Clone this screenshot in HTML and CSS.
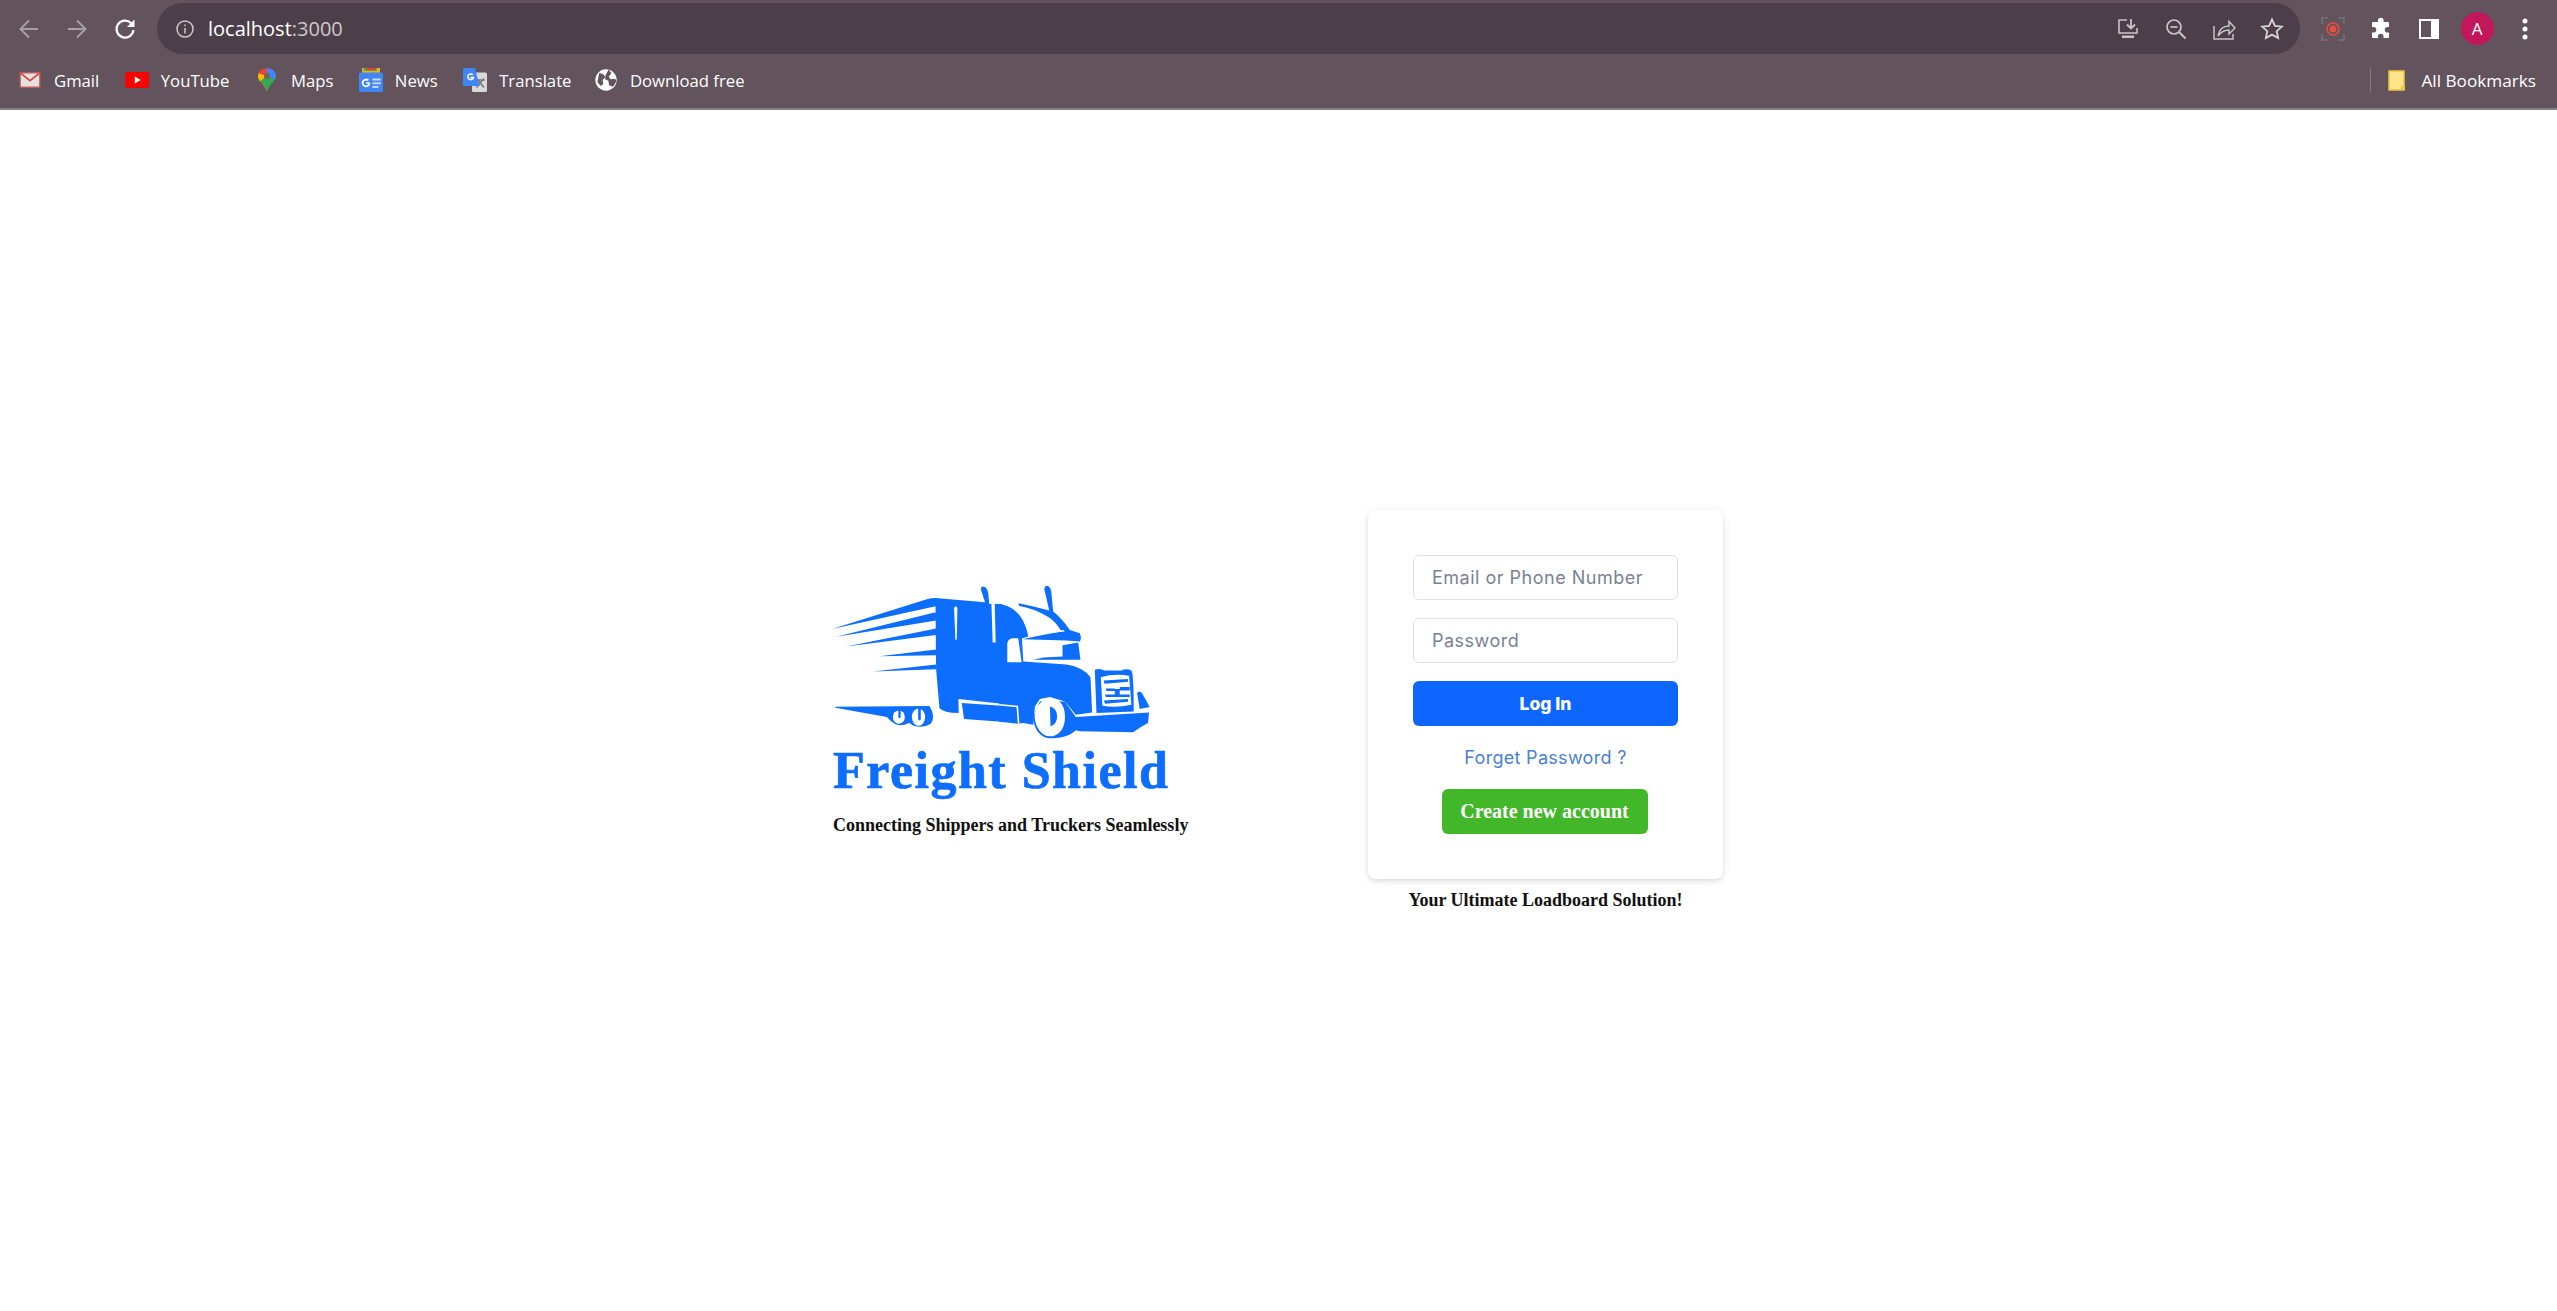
FILE: index.html
```html
<!DOCTYPE html>
<html lang="en">
<head>
    <meta charset="UTF-8">
    <meta name="viewport" content="width=device-width, initial-scale=1.0">
    <title>Freight Shield</title>
    <link rel="stylesheet" href="styles.css">
</head>
<body>
    <!-- browser toolbar -->
    <div class="toolbar">
        <svg class="nav-icon" viewBox="0 0 24 24"><path d="M21 12H4M12 3.500L3.500 12l8.500 8.500" fill="none" stroke="#a89ea5" stroke-width="2"/></svg>
        <svg class="nav-icon" viewBox="0 0 24 24"><path d="M3 12h17M12 3.500l8.500 8.500-8.500 8.500" fill="none" stroke="#a89ea5" stroke-width="2"/></svg>
        <svg class="nav-icon" viewBox="0 0 24 24"><path d="M20.500 13a8.500 8.500 0 1 1-2.500-7L20 8" fill="none" stroke="#fff" stroke-width="2.200"/><path d="M21.500 2.500V10H14z" fill="#fff"/></svg>
        <div class="omnibox">
            <svg class="info-icon" viewBox="0 0 20 20"><circle cx="10" cy="10" r="8" fill="none" stroke="#cfc9cd" stroke-width="1.500"/><path d="M10 9v5.500M10 5.500v1.800" stroke="#cfc9cd" stroke-width="1.500"/></svg>
            <span class="url">localhost<span class="url-port">:3000</span></span>
            <div class="omni-actions">
                <svg class="omni-icon" viewBox="0 0 24 24"><path d="M11 3H3v13h18v-5M3 16" fill="none" stroke="#c9c4c8" stroke-width="1.600"/><path d="M15 2v9M11 7.500l4 4 4-4" fill="none" stroke="#c9c4c8" stroke-width="1.800"/><path d="M6 18.500h12V21H6z" fill="#c9c4c8"/></svg>
                <svg class="omni-icon" viewBox="0 0 24 24"><circle cx="10" cy="10" r="7" fill="none" stroke="#c9c4c8" stroke-width="1.700"/><path d="M15 15l6.500 6.500" stroke="#c9c4c8" stroke-width="2"/><path d="M6.500 10h7" stroke="#c9c4c8" stroke-width="1.700"/></svg>
                <svg class="omni-icon" viewBox="0 0 24 24"><path d="M2 9v13h19v-5" fill="none" stroke="#c9c4c8" stroke-width="1.500"/><path d="M6 19c1-6 5-10 11-10V4.500l6 6.500-6 6v-4c-5 0-8 2-11 6z" fill="none" stroke="#c9c4c8" stroke-width="1.500"/></svg>
                <svg class="omni-icon" viewBox="0 0 24 24"><path d="M12 2.500l2.900 6.300 6.900.8-5.100 4.600 1.400 6.800-6.100-3.400L5.900 21l1.400-6.800L2.200 9.600l6.900-.8z" fill="none" stroke="#d6d2d5" stroke-width="1.800"/></svg>
            </div>
        </div>
        <div class="tool-actions">
            <svg class="tool-icon" viewBox="0 0 24 24"><path d="M1 7V1h6M17 1h6v6M23 17v6h-6M7 23H1v-6" fill="none" stroke="#7a7378" stroke-width="1.500"/><circle cx="12" cy="12" r="6" fill="none" stroke="#e8503e" stroke-width="1.500"/><circle cx="12" cy="12" r="3.500" fill="#e8503e"/></svg>
            <svg class="tool-icon" viewBox="0 0 24 24"><path d="M9 3.500a2.800 2.800 0 0 1 5.600 0V5H19a1 1 0 0 1 1 1v4h-1.400a2.800 2.800 0 0 0 0 5.600H20V20a1 1 0 0 1-1 1h-4.500v-1.500a2.800 2.800 0 0 0-5.600 0V21H4a1 1 0 0 1-1-1v-4.500h1.500a2.800 2.800 0 0 0 0-5.600H3V6a1 1 0 0 1 1-1h5z" fill="#fff"/></svg>
            <svg class="tool-icon" viewBox="0 0 24 24"><path d="M2 2h20v20H2zM4 4v16h10V4z" fill="#fff" fill-rule="evenodd"/></svg>
            <div class="avatar">A</div>
            <svg class="tool-icon" viewBox="0 0 24 24"><circle cx="12" cy="4" r="2.500" fill="#fff"/><circle cx="12" cy="12" r="2.500" fill="#fff"/><circle cx="12" cy="20" r="2.500" fill="#fff"/></svg>
        </div>
    </div>

    <!-- bookmarks -->
    <div class="bookmarks">
        <a class="bookmark">
            <svg class="favicon" viewBox="-1.150 -1.150 18.300 18.300"><path d="M.5 2.500h15v11H.5z" fill="#e6e1e1" stroke="#c9584f"/><path d="M1 3l7 5.500L15 3" fill="none" stroke="#d8453a" stroke-width="1.300"/></svg>
            Gmail
        </a>
        <a class="bookmark">
            <svg class="favicon" viewBox="0 0 16 16"><rect y="2.700" width="16" height="10.600" rx="2" fill="#f00"/><path d="M6.500 5.700L10.500 8l-4 2.300z" fill="#fff"/></svg>
            YouTube
        </a>
        <a class="bookmark">
            <svg class="favicon" viewBox="0 0 16 16"><path d="M8 0c-3.200 0-6 2.400-6 5.300 0 1.300.5 2.400 1.300 3.500L8 15.900z" fill="#ea4335"/><path d="M8 0c3.200 0 6 2.400 6 5.300 0 1-.3 1.800-.9 2.500L8 5.300z" fill="#4285f4"/><path d="M3 8l5-3 5.100 2.800c-1.800 2.600-3.900 4.400-5.100 8.100C7 12.500 5 11 3 8z" fill="#34a853"/><path d="M2.300 3.500L8 5.300 3.300 8.800C2.500 7.700 2 6.600 2 5.300z" fill="#fbbc04"/><circle cx="8" cy="5.300" r="2" fill="#7a5f60"/></svg>
            Maps
        </a>
        <a class="bookmark">
            <svg class="favicon" viewBox="0 0 16 16"><path d="M2 0h12v4H2z" fill="#f2b01e"/><path d="M3 0h9v2H3z" fill="#4caf50"/><path d="M5 0h6v1.500H5z" fill="#d9453a"/><rect y="3" width="16" height="13" rx="1" fill="#4285f4"/><path d="M9 7h5.500v1.300H9zM9 9.500h5.500v1.300H9zM9 12h4v1.300H9z" fill="#c7d9f8"/><path d="M7 10.200a2.300 2.300 0 1 1-.8-2" fill="none" stroke="#fff" stroke-width="1.200"/><path d="M4.800 10h2.400" stroke="#fff" stroke-width="1"/></svg>
            News
        </a>
        <a class="bookmark bookmark-tight">
            <svg class="favicon" viewBox="0 0 16 16"><rect x="6" y="3" width="10" height="13" rx="1" fill="#d9d9d9"/><path d="M9 7l5 6M14 7l-5 6M8.500 8h6" stroke="#777" stroke-width="1"/><path d="M1 0h7l3 12H1a1 1 0 0 1-1-1V1a1 1 0 0 1 1-1z" fill="#4285f4"/><path d="M6.500 4.500A1.900 1.900 0 1 0 7 6.300H5" fill="none" stroke="#fff" stroke-width="1"/></svg>
            Translate
        </a>
        <a class="bookmark">
            <svg class="favicon" viewBox="-1 -1 18 18"><circle cx="8" cy="8" r="8" fill="#fff"/><path d="M3 2.500l3.500 1.500 1 2L5.500 8 6 11l-2 1.500-2.500-3zM10 0l2 3-2 2.500 1.500 2 3.500-.5.800 2-2.500 4-3-1-.5-3.500-2.500-1 .5-3.500 1.500-2.500z" fill="#62535d"/></svg>
            Download free
        </a>
        <div class="all-bookmarks">
            <svg class="folder" viewBox="0 0 18 21"><path d="M1 1h15v14l-0 5H1z" fill="#fde588" stroke="#f0c342" stroke-width="1.500"/><path d="M13 20v-4h4v4z" fill="#f0c342"/></svg>
            All Bookmarks
        </div>
    </div>

    <!-- page -->
    <main class="page">
        <div class="brand">
            <svg class="truck" viewBox="0 0 1110 520">
                <!-- rear half -->
                <g transform="translate(60 30)">
                    <g fill="#0d6efd">
                        <path d="M5 147L290 58Q305 53 320 54V78z"/>
                        <path d="M18 171L316 97Q321 110 318 122z"/>
                        <path d="M48 200L318 146V165z"/>
                        <path d="M148 229L318 209V226z"/>
                        <path d="M128 275L318 254V268z"/>
                        <!-- trailer -->
                        <path d="M316 54L465 67L452 26Q454 16 466 22Q476 30 476 55L478 72H515V372L385 358L386 400Q340 400 328 385L318 268z"/>
                        <path d="M395 370L515 378V426L402 418z"/>
                        <!-- tail streak and rear wheels -->
                        <path d="M15 381L298 379Q318 410 302 432Q280 446 250 438Q240 430 235 430Q215 442 195 433Q180 425 170 412L15 384z"/>
                    </g>
                    <g fill="#fff">
                        <path d="M372 84Q377 76 382 84L380 180H376z"/>
                        <path d="M484 64H494L497 188H488z"/>
                        <ellipse cx="206" cy="412" rx="18" ry="20"/>
                        <ellipse cx="265" cy="412" rx="20" ry="26"/>
                    </g>
                    <g fill="none" stroke="#0d6efd" stroke-linecap="round">
                        <path d="M208 388V412" stroke-width="7"/>
                        <path d="M268 384V418" stroke-width="8"/>
                    </g>
                </g>
                <!-- cab half -->
                <g transform="translate(570 30)">
                    <g fill="#0d6efd">
                        <path d="M-2 72C45 78 75 115 85 170L66 176L70 245L200 254Q250 262 272 292L277 398L228 405L195 365L150 352L120 358L105 380L100 435L70 430L55 432L-2 426z"/>
                        <!-- fairing and stack -->
                        <path d="M55 70Q100 78 148 92L133 26Q135 15 145 18Q155 25 155 45L160 95Q185 115 210 150L240 160Q246 175 240 185L200 182L68 178L105 170L185 155Q165 120 140 108Q100 85 58 78z"/>
                        <path d="M188 196L235 188L242 240L100 240L130 233L188 230z"/>
                        <!-- wheel surround and bumper -->
                        <path d="M100 410C100 445 120 478 160 476C190 476 215 465 228 452L240 455L400 458Q425 440 445 430L448 398L228 412L195 365H120z"/>
                        <!-- grille -->
                        <path d="M285 270Q300 264 315 272H365Q380 264 395 272Q402 280 402 395L290 400z"/>
                        <path d="M412 340Q420 330 428 342L450 382L420 388z"/>
                    </g>
                    <g fill="#fff">
                        <path d="M22 190Q25 175 40 175H55L65 247H22z"/>
                        <path d="M150 356C185 355 198 385 195 420C192 455 170 470 150 470C125 470 105 440 104 410C106 380 125 358 150 356z"/>
                        <path d="M303 292Q345 280 388 288L395 375Q350 385 308 378z"/>
                        <path d="M135 157L190 150L195 155L140 160z"/>
                    </g>
                    <path d="M-2 375L52 380L56 432" fill="none" stroke="#fff" stroke-width="5"/>
                    <g fill="#0d6efd">
                        <path d="M150 380Q172 385 172 412Q170 435 152 440z"/>
                        <path d="M312 302L385 298V306L314 312zM318 326H345V334H320zM360 322H390V332H360zM316 344H390V352H318zM345 328H360V344H345zM312 362L385 358V366L316 372z"/>
                    </g>
                </g>
            </svg>
            <h1 class="brand-name">Freight Shield</h1>
            <p class="brand-tag">Connecting Shippers and Truckers Seamlessly</p>
        </div>
        <div class="login">
            <form class="card">
                <input class="field" type="text" placeholder="Email or Phone Number">
                <input class="field" type="password" placeholder="Password">
                <button class="btn-login" type="button">Log In</button>
                <a class="forget">Forget Password ?</a>
                <button class="btn-create" type="button">Create new account</button>
            </form>
            <p class="login-tag">Your Ultimate Loadboard Solution!</p>
        </div>
    </main>
</body>
</html>
```

FILE: styles.css
```css
* {
    box-sizing: border-box;
}
html, body {
    height: 100%;
}
body {
    margin: 0;
    display: flex;
    flex-direction: column;
    background: #fff;
    overflow: hidden;
}

/* browser */
.toolbar {
    height: 56px;
    background: #62535d;
    display: flex;
    align-items: center;
    gap: 24px;
    padding: 3px 0 2px 17px;
    font-family: "Open Sans", sans-serif;
}
.nav-icon {
    width: 24px;
    height: 24px;
    flex: none;
}
.omnibox {
    flex: 1;
    height: 51px;
    margin: 0 -3px 0 -4px;
    background: #4d3f49;
    border-radius: 26px;
    display: flex;
    align-items: center;
    padding: 0 16px 0 18px;
}
.info-icon {
    width: 20px;
    height: 20px;
    margin: 0 13px 0 0;
}
.url {
    color: #fff;
    font-size: 20px;
}
.url-port {
    color: #cdc8cc;
}
.omni-actions {
    margin-left: auto;
    display: flex;
    gap: 24px;
}
.omni-icon {
    width: 24px;
    height: 24px;
}
.tool-actions {
    display: flex;
    align-items: center;
    gap: 24px;
    padding-right: 20px;
}
.tool-icon {
    width: 24px;
    height: 24px;
}
.avatar {
    width: 33px;
    height: 33px;
    margin: 0 -4.500px;
    border-radius: 50%;
    background: #c2185b;
    color: #fff;
    font-size: 17px;
    display: flex;
    align-items: center;
    justify-content: center;
}
.bookmarks {
    height: 54px;
    background: #62535d;
    border-bottom: 2px solid #8b8087;
    display: flex;
    align-items: center;
    padding: 0 21px 4px 18px;
    color: #fff;
    font-family: "Open Sans", sans-serif;
    font-size: 16.700px;
}
.bookmark {
    display: flex;
    align-items: center;
    gap: 12px;
    margin-right: 25.500px;
}
.bookmark-tight {
    margin-right: 22.500px;
}
.favicon {
    width: 24px;
    height: 24px;
}
.all-bookmarks {
    margin-left: auto;
    height: 24px;
    display: flex;
    align-items: center;
    gap: 15px;
    padding-left: 17px;
    border-left: 1px solid #85797f;
    font-size: 17.200px;
}
.folder {
    width: 18px;
    height: 21px;
}

/* page */
.page {
    flex: 1;
    display: flex;
    align-items: center;
    justify-content: center;
    gap: 180px;
    padding: 2px 2px 0 0;
}
.brand {
    display: flex;
    flex-direction: column;
    width: 356px;
    margin-bottom: 17px;
}
.truck {
    width: 370px;
    height: 173px;
    margin: 0 0 0 -22px;
}
.brand-name {
    margin: -1px 0 0 1px;
    color: #0d6efd;
    font-family: "Liberation Serif", serif;
    font-size: 52px;
    line-height: 58px;
    font-weight: 700;
    letter-spacing: 1.500px;
    -webkit-text-stroke: 0.7px #0d6efd;
    white-space: nowrap;
}
.brand-tag {
    margin: 15px 0 0 1px;
    font-family: "Liberation Serif", serif;
    font-size: 18px;
    font-weight: 700;
    color: #111;
    white-space: nowrap;
}
.login {
    width: 355px;
    margin-bottom: 2px;
}
.card {
    height: 369px;
    padding: 45px;
    background: #fff;
    border-radius: 8px;
    box-shadow: 0 2px 4px rgba(0, 0, 0, .1), 0 2px 12px rgba(0, 0, 0, .06);
    display: flex;
    flex-direction: column;
    align-items: center;
}
.field {
    width: 100%;
    height: 45px;
    margin-bottom: 18px;
    padding: 0 18px;
    border: 1px solid #dee2e6;
    border-radius: 6px;
    font-family: Inter, sans-serif;
    font-size: 18px;
    letter-spacing: 0.500px;
    outline: none;
}
.field::placeholder {
    color: #7b8194;
}
.btn-login {
    width: 100%;
    height: 45px;
    flex: none;
    border: 0;
    border-radius: 6px;
    background: #0d66ff;
    color: #fff;
    font-family: Inter, sans-serif;
    font-size: 17.500px;
    font-weight: 800;
    padding-top: 1px;
}
.forget {
    margin-top: 20px;
    color: #4a7fd6;
    font-family: Inter, sans-serif;
    font-size: 18px;
    letter-spacing: 0.300px;
    line-height: 24px;
}
.btn-create {
    width: 206px;
    height: 45px;
    flex: none;
    margin: 19px 2px 0 0;
    border: 0;
    border-radius: 6px;
    background: #42b72a;
    color: #fff;
    font-family: "Liberation Serif", serif;
    font-size: 20px;
    font-weight: 700;
}
.login-tag {
    margin: 11px 0 0;
    text-align: center;
    font-family: "Liberation Serif", serif;
    font-size: 18px;
    font-weight: 700;
    color: #111;
}
```
